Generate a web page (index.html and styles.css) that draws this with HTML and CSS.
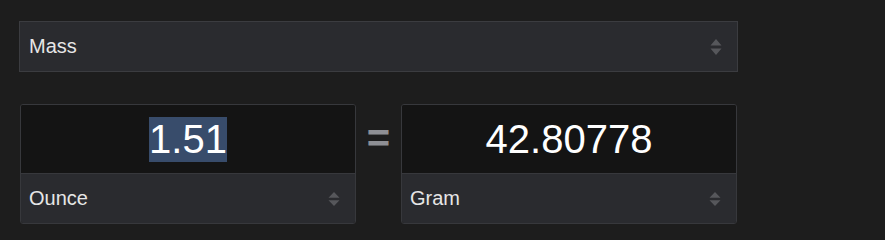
FILE: index.html
```html
<!DOCTYPE html>
<html lang="en">
<head>
    <meta charset="UTF-8">
    <meta name="viewport" content="width=device-width, initial-scale=1.0">
    <title>Unit Converter</title>
    <link rel="stylesheet" href="styles.css">
</head>
<body>
    <div class="converter">
        <div class="select category">
            <span>Mass</span>
            <svg class="arrows" width="12" height="18" viewBox="0 0 12 18">
                <path d="M6 1 L11.5 7.5 L0.5 7.5 Z M6 17 L11.5 10.5 L0.5 10.5 Z" fill="#56575b"/>
            </svg>
        </div>

        <div class="row">
            <div class="unit-box">
                <div class="value"><span class="selected">1.51</span></div>
                <div class="select unit">
                    <span>Ounce</span>
                    <svg class="arrows" width="12" height="16" viewBox="0 0 12 16">
                        <path d="M6 1 L11.5 6.8 L0.5 6.8 Z M6 15 L11.5 9.2 L0.5 9.2 Z" fill="#56575b"/>
                    </svg>
                </div>
            </div>

            <div class="equals">=</div>

            <div class="unit-box">
                <div class="value"><span>42.80778</span></div>
                <div class="select unit">
                    <span>Gram</span>
                    <svg class="arrows" width="12" height="16" viewBox="0 0 12 16">
                        <path d="M6 1 L11.5 6.8 L0.5 6.8 Z M6 15 L11.5 9.2 L0.5 9.2 Z" fill="#56575b"/>
                    </svg>
                </div>
            </div>
        </div>
    </div>
</body>
</html>
```

FILE: styles.css
```css
body {
    font-family: 'Liberation Sans', Arial, sans-serif;
    background-color: #1d1d1d;
    margin: 0;
    color: #e6e6e6;
}

.converter {
    width: 719px;
    padding: 21px 0 0 19px;
}

.select {
    background-color: #2a2b2f;
    display: flex;
    align-items: center;
    justify-content: space-between;
    font-size: 20px;
    box-sizing: border-box;
}

.category {
    height: 51px;
    border: 1px solid #3b3c40;
    padding: 0 15px 0 9px;
}

.row {
    display: flex;
    align-items: flex-start;
    margin-top: 32px;
    padding: 0 1px;
}

.unit-box {
    width: 336px;
    border: 1px solid #37383c;
    border-radius: 3px;
    box-sizing: border-box;
    overflow: hidden;
}

.value {
    height: 68px;
    background-color: #141414;
    display: flex;
    align-items: center;
    justify-content: center;
    font-size: 40px;
    color: #ffffff;
}

.selected {
    background-color: #384c6b;
}

.unit {
    height: 50px;
    border-top: 1px solid #37383c;
    padding: 0 15px 0 8px;
}

.equals {
    width: 45px;
    text-align: center;
    font-size: 40px;
    font-weight: bold;
    color: #8e8f94;
    line-height: 68px;
}
```
